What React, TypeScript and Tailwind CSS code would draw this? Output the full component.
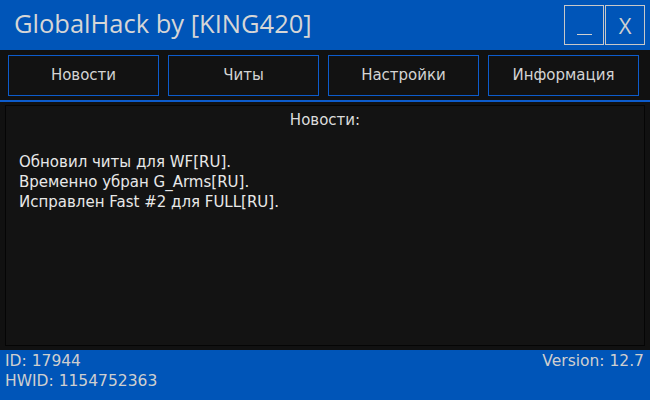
const tabs = ["Новости", "Читы", "Настройки", "Информация"];

const news = [
  "Обновил читы для WF[RU].",
  "Временно убран G_Arms[RU].",
  "Исправлен Fast #2 для FULL[RU].",
];

export default function App() {
  return (
    <div className="w-[650px] h-[400px] flex flex-col bg-[#111111] text-[#d4d4d4] font-['DejaVu_Sans',sans-serif] overflow-hidden">
      {/* title bar */}
      <div className="h-[50px] bg-[#0055b8] flex items-center justify-between pl-[14px] pr-[5px]">
        <span className="text-[25.5px] leading-none font-['Open_Sans',sans-serif] text-[#d6d6d6] -mt-[2px]">
          GlobalHack by [KING420]
        </span>
        <div className="flex gap-[1px] self-start mt-[5px]">
          <button className="w-[40px] h-[40px] border border-[#c8c8c8] flex items-end justify-center pb-[9px] text-[#d0d0d0]">
            <span className="block w-[15px] h-[1px] bg-[#d0d0d0]" />
          </button>
          <button className="w-[40px] h-[40px] border border-[#c8c8c8] flex items-center justify-center text-[22px] leading-none text-[#d0d0d0] font-['Open_Sans',sans-serif]">
            X
          </button>
        </div>
      </div>

      {/* tabs */}
      <div className="grid grid-cols-4 gap-[9px] pl-[8px] pr-[11px] pt-[5px] h-[50px]">
        {tabs.map((t) => (
          <button
            key={t}
            className="h-[41px] border border-[#0d5ccc] bg-[#121212] text-[15px] text-[#d4d4d4] flex items-center justify-center"
          >
            {t}
          </button>
        ))}
      </div>
      <div className="h-[2px] bg-[#0d5ccc]" />

      {/* content */}
      <div className="flex-1 px-[5px] pt-[3px] pb-[4px] flex">
        <div className="flex-1 border border-[#050505] bg-[#131313] pt-[3px] px-[13px]">
          <div className="text-center text-[15px] text-[#dcdcdc]">Новости:</div>
          <div className="mt-[20px] flex flex-col text-[15px] leading-[20px] text-[#e8e8e8]">
            {news.map((n) => (
              <span key={n}>{n}</span>
            ))}
          </div>
        </div>
      </div>

      {/* footer */}
      <div className="h-[50px] bg-[#0055b8] flex justify-between pl-[5px] pr-[6px] pt-[1px] text-[15.5px] leading-[20px] text-[#cfcfcf]">
        <div className="flex flex-col">
          <span>ID: 17944</span>
          <span>HWID: 1154752363</span>
        </div>
        <span>Version: 12.7</span>
      </div>
    </div>
  );
}
